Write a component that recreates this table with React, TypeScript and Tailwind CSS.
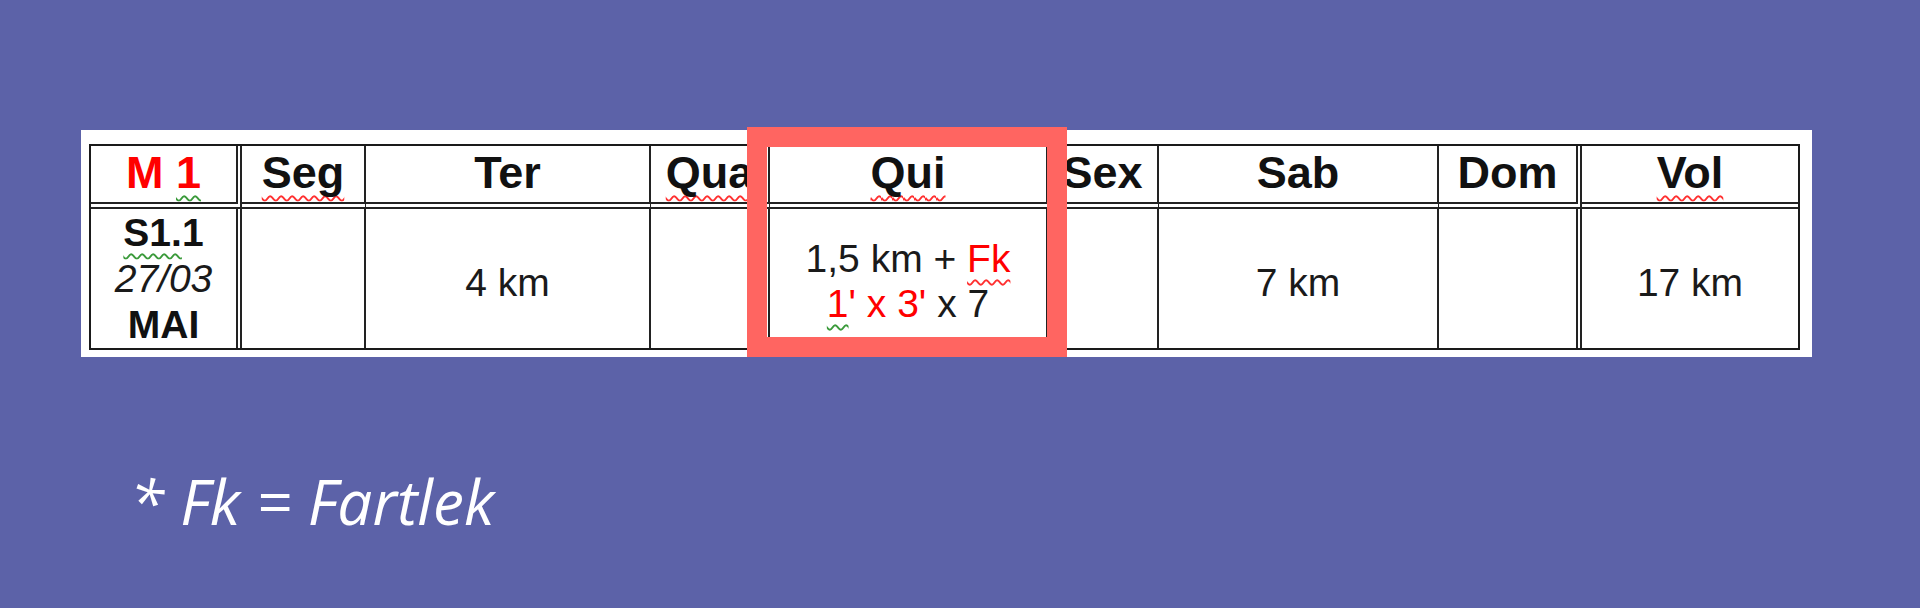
const cols = 'grid-cols-[151px_124px_285px_119px_278px_111px_280px_143px_216px]';

function Head({ children, last, dbl }: { children: React.ReactNode; last?: boolean; dbl?: boolean }) {
  return (
    <div
      className={`flex items-center justify-center overflow-hidden whitespace-nowrap pb-1 text-[45px] font-bold leading-none text-[#111] border-double border-b-[7px] border-b-[#222] ${
        last ? '' : dbl ? 'border-r-[6px] border-r-[#222]' : 'border-r-2 border-r-[#222]'
      }`}
    >
      {children}
    </div>
  );
}

function Cell({ children, last, dbl, cls = '' }: { children?: React.ReactNode; last?: boolean; dbl?: boolean; cls?: string }) {
  return (
    <div
      className={`flex items-center justify-center text-center text-[39px] leading-none text-[#1a1a1a] ${cls} ${
        last ? '' : dbl ? 'border-r-[6px] border-double border-r-[#222]' : 'border-r-2 border-r-[#222]'
      }`}
    >
      {children}
    </div>
  );
}

// spell-check squiggles
const redWave =
  'underline decoration-wavy decoration-[#ff3030] decoration-[1.5px] underline-offset-[7px] [text-decoration-skip-ink:none]';
const greenWave =
  'underline decoration-wavy decoration-[#3a9a3a] decoration-[1.5px] underline-offset-[7px] [text-decoration-skip-ink:none]';

export default function App() {
  return (
    <div className="w-[1920px] h-[608px] bg-[#5c62a8] overflow-hidden pt-[130px]">
      <div className="relative ml-[81px] w-[1731px] h-[227px] bg-white pl-2 pt-[14px]">
        <div
          className={`grid ${cols} grid-rows-[63px_139px] w-[1711px] border-2 border-[#1a1a1a] font-['Liberation_Sans',Arial,sans-serif]`}
        >
          <Head dbl>
            <span className="text-[#ff0000]">
              M <span className={greenWave}>1</span>
            </span>
          </Head>
          <Head>
            <span className={redWave}>Seg</span>
          </Head>
          <Head>Ter</Head>
          <Head>
            <span className={redWave}>Qua</span>
          </Head>
          <Head>
            <span className={redWave}>Qui</span>
          </Head>
          <Head>Sex</Head>
          <Head>Sab</Head>
          <Head dbl>Dom</Head>
          <Head last>
            <span className={redWave}>Vol</span>
          </Head>

          <Cell dbl cls="text-[37px]">
            <div className="flex flex-col items-center leading-[46px]">
              <span className="font-bold text-[#111]">
                <span className={greenWave}>S1.</span>1
              </span>
              <span className="italic">27/03</span>
              <span className="font-bold text-[#111]">MAI</span>
            </div>
          </Cell>
          <Cell />
          <Cell cls="pt-2">4 km</Cell>
          <Cell />
          <Cell cls="pt-[5px]">
            <div className="flex flex-col items-center leading-[45px] whitespace-nowrap">
              <span>
                1,5 km + <span className={`text-[#ff0000] ${redWave}`}>Fk</span>
              </span>
              <span>
                <span className="text-[#ff0000]">
                  <span className={greenWave}>1</span>' x 3'
                </span>{' '}
                x 7
              </span>
            </div>
          </Cell>
          <Cell />
          <Cell cls="pt-2">7 km</Cell>
          <Cell dbl />
          <Cell last cls="pt-2">17 km</Cell>
        </div>

        <div className="absolute left-[666px] top-[-3px] w-[320px] h-[230px] border-[20px] border-[#ff6561]" />
      </div>

      <p className="mt-[113px] pl-[130px] font-['Open_Sans',sans-serif] italic text-[62px] leading-none text-white">
        * Fk = Fartlek
      </p>
    </div>
  );
}
